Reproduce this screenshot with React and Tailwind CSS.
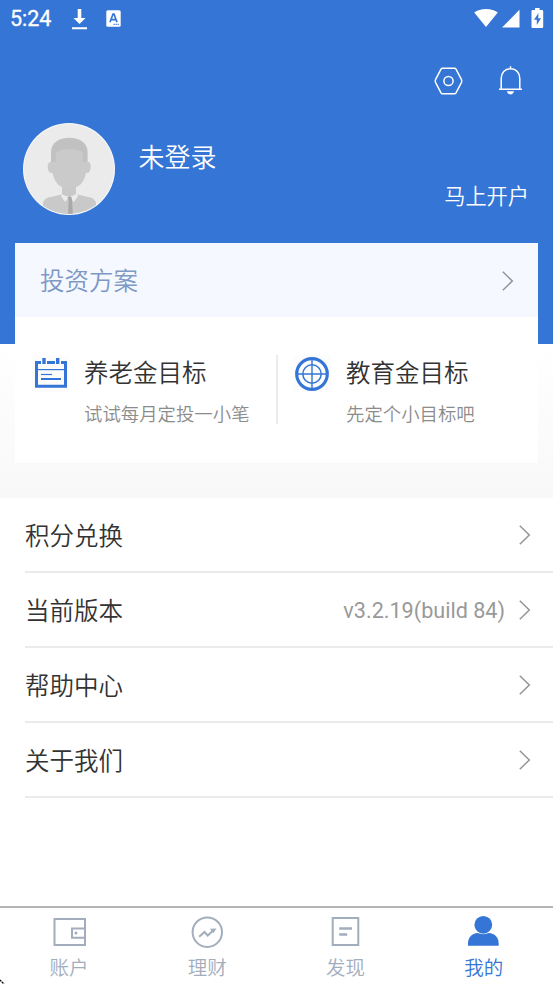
import clsx from 'clsx';

const LINKS = [
  { title: '积分兑换' },
  { title: '当前版本', value: 'v3.2.19(build 84)' },
  { title: '帮助中心' },
  { title: '关于我们' },
];

const Chevron = () => (
  <svg width="12" height="20" viewBox="0 0 12 20" fill="none" stroke="#949494" strokeWidth="1.5" className="shrink-0">
    <path d="M.8 .8 10.300 10 .8 19.200" />
  </svg>
);

const StatusBar = () => (
  <div className="flex h-[38px] items-center pl-[10px] pr-[9px] text-white">
    <span className="w-[61px] text-[21.5px] font-normal leading-none [-webkit-text-stroke:0.3px_white]">5:24</span>
    <svg width="17" height="21" viewBox="0 0 17 21" fill="currentColor">
      <path d="M6.700 0h3.600v9h4.200l-6 6-6-6h4.200zM1 18.200h15v2H1z" />
    </svg>
    <svg width="15" height="17" viewBox="0 0 15 17" className="-mt-0.5 ml-[18px]">
      <rect x=".3" y=".3" width="14.400" height="16.400" rx="1.500" fill="#fff" />
      <path d="M4 12.300 7 4h1l3 8.300M5.200 9.600h4.600" fill="none" stroke="#3575d5" strokeWidth="1.700" />
      <path d="M7.600 14.400h1.200m.8 0h1.200m.8 0h1.200" stroke="#3575d5" strokeWidth="1.200" />
    </svg>
    <div className="-mt-0.5 ml-auto flex items-center">
      <svg width="24" height="20" viewBox="0 0 24 20" fill="currentColor">
        <path d="M.2 4.600C3.200 2.200 7.300.9 12 .9s8.800 1.300 11.800 3.700L12 19z" />
      </svg>
      <svg width="18" height="19" viewBox="0 0 18 19" fill="currentColor" className="ml-1">
        <path d="M0 18.500 17.500.8v17.700z" />
      </svg>
      <svg width="13" height="21" viewBox="0 0 13 21" className="ml-[11px]">
        <path d="M4 0h4.600v2H11a1.200 1.200 0 0 1 1.200 1.200v15.600A1.200 1.200 0 0 1 11 20H1.700a1.200 1.200 0 0 1-1.200-1.200V3.200A1.200 1.200 0 0 1 1.700 2H4z" fill="#fff" />
        <path d="M7.500 5 3 11.800h2.800V17L10 10.200H7.200z" fill="#3575d5" />
      </svg>
    </div>
  </div>
);

const Avatar = () => (
  <svg width="92" height="92" viewBox="0 0 92 92" className="shrink-0">
    <defs>
      <clipPath id="avatar">
        <circle cx="46" cy="46" r="45" />
      </clipPath>
    </defs>
    <circle cx="46" cy="46" r="46" fill="#fafafa" />
    <g clipPath="url(#avatar)">
      <path d="M0 0h92v92H0z" fill="#ebebeb" />
      <path d="M20 92V80c1-4 4-5.500 8-6l12-3h13l12 3c4 .5 7 2 8 6v12z" fill="#c9c9c9" />
      <path d="m40 69-2 4 4 6 4-5 5 5 4-6-2-4z" fill="#ebebeb" />
      <path d="M39 58h14v13c-4 3-10 3-14 0z" fill="#c9c9c9" />
      <path d="m44.500 74 2-.7 2 .7.500 3 1 15h-5l.7-15z" fill="#a9a9a9" />
      <path d="M28 40V29c0-9 8-14.200 18.300-14.200S64.600 20 64.600 29v11z" fill="#c1c1c1" />
      <path d="M28.500 39h4.300v-9.500c3-2.500 8-3.500 13.500-3.500s10.500 1 13.500 3.500V39h4.500c3 0 3.700 2 3.400 5.500-.3 3.500-1.700 6-4.700 5.500-1 5-3 9-6 12-2.500 2-6 2.800-10.700 2.800S38 64 35.500 62c-3-3-5-7-6-12-3 .5-4.400-2-4.700-5.500-.3-3.500.7-5.500 3.700-5.500z" fill="#cacaca" />
    </g>
  </svg>
);

const CalendarIcon = () => (
  <svg width="32" height="31" viewBox="0 0 32 31" fill="none" stroke="#3575d5">
    <path d="M6 4.500H1.500v23.700h29V4.500H26M12 4.500h8" strokeWidth="3" />
    <path d="M9 0v6M22.700 0v6" strokeWidth="3.400" />
    <path d="M2 11.600h28" strokeWidth="1.200" />
    <path d="M6 16.500h11" strokeWidth="1.200" />
    <path d="M6 21h20" strokeWidth="2" />
  </svg>
);

const TargetIcon = () => (
  <svg width="34" height="34" viewBox="0 0 34 34" fill="none" stroke="#3575d5" className="mr-px">
    <circle cx="17" cy="17" r="15.300" strokeWidth="3.200" />
    <circle cx="17" cy="17" r="9.200" strokeWidth="1.500" />
    <path d="M17 2v30M2 17h30" strokeWidth="1.400" />
  </svg>
);

const Goal = ({ icon, title, hint }) => (
  <div className="flex">
    <div className="mr-[15px] flex h-[37px] w-[37px] shrink-0 items-center justify-center bg-[#fcfcfc]">{icon}</div>
    <div className="whitespace-nowrap">
      <div className="mt-px text-[24.5px] leading-9 text-[#333]">{title}</div>
      <div className="mt-1.5 text-[18.4px] leading-[34px] text-[#8c8c8c]">{hint}</div>
    </div>
  </div>
);

const TABS = [
  {
    label: '账户',
    icon: (
      <>
        <rect x="2.500" y="4" width="30.500" height="26" strokeWidth="2" />
        <path d="M33 13.500H20v9.200h13" strokeWidth="2" />
        <circle cx="24" cy="18" r="1.500" fill="currentColor" stroke="none" />
      </>
    ),
  },
  {
    label: '理财',
    icon: (
      <>
        <circle cx="17.300" cy="17.200" r="14.700" strokeWidth="2" />
        <path d="m9.200 21.800 5.300-4.800 3.200 3.500 5.500-5" strokeWidth="2" />
        <path d="m20 13.800 6.500-.3-3.200 4.800z" fill="currentColor" stroke="none" />
      </>
    ),
  },
  {
    label: '发现',
    icon: (
      <>
        <rect x="4.700" y="3" width="25.600" height="27" strokeWidth="2" />
        <path d="M11.200 13.500H24M11.200 19.500h8" strokeWidth="2.400" />
      </>
    ),
  },
  {
    label: '我的',
    active: true,
    icon: (
      <g fill="currentColor" stroke="none">
        <circle cx="17.300" cy="9.800" r="8.900" />
        <path d="M2 30.800v-2.200c0-6.300 4.300-10.300 9.600-10.600 3.500 1.500 7.900 1.500 11.400 0 5.300.3 9.700 4.300 9.700 10.600v2.200z" />
      </g>
    ),
  },
];

export default function App() {
  return (
    <div className="relative flex h-[984px] w-[553px] flex-col overflow-hidden bg-white font-['Roboto','Noto_Sans_CJK_SC',sans-serif] font-[350]">
      <header className="h-[344px] shrink-0 bg-[#3575d5] text-white">
        <StatusBar />
        <div className="mt-[27px] flex h-[30px] items-center justify-end gap-[35px] pr-[30px]">
          <svg width="29" height="28" viewBox="0 0 29 28" fill="none" stroke="currentColor" strokeWidth="1.500" className="mt-px">
            <path d="M8.500 1.200h12q1 0 1.500.9l5.500 10.600q.6 1.300 0 2.600L22 25.900q-.5.900-1.500.9h-12q-1 0-1.500-.9L1.500 15.300q-.6-1.300 0-2.600L7 2.100q.5-.9 1.500-.9z" />
            <circle cx="14.500" cy="14" r="4.600" />
          </svg>
          <svg width="25" height="29" viewBox="0 0 25 29" fill="none" stroke="currentColor" strokeWidth="1.500">
            <path d="M1 23.300h23M3.200 23V12.500c0-5.800 3.700-9.700 9.300-9.700s9.300 3.900 9.300 9.700V23M12.500 3V.3" />
            <path d="M9 25.200h7c-.4 2-1.700 3.200-3.500 3.200s-3.100-1.200-3.500-3.200z" fill="currentColor" stroke="none" />
          </svg>
        </div>
        <div className="mt-7 flex h-[92px] pl-[23px] pr-6">
          <Avatar />
          <div className="ml-[23.5px] mt-4 text-[26px] leading-[38px]">未登录</div>
          <div className="ml-auto self-end text-[21.2px] leading-9">马上开户</div>
        </div>
      </header>

      <div className="h-[154px] shrink-0 bg-linear-to-b from-white to-[#f8f8f8] px-[15px]">
        <section className="relative -top-[101px] h-[220px] bg-white">
          <div className="flex h-[74px] items-center justify-between bg-[#f5f8ff] pl-[25px] pr-6 pt-0.5">
            <span className="pt-[3px] text-[24.5px] text-[#7d99c4]">投资方案</span>
            <Chevron />
          </div>
          <div className="flex pl-[17px] pt-[38px]">
            <div className="h-[69px] w-[246px] border-r-2 border-[#ececec]">
              <Goal icon={<CalendarIcon />} title="养老金目标" hint="试试每月定投一小笔" />
            </div>
            <div className="pl-4">
              <Goal icon={<TargetIcon />} title="教育金目标" hint="先定个小目标吧" />
            </div>
          </div>
        </section>
      </div>

      <main className="flex-1 pl-[25px]">
        {LINKS.map((item) => (
          <div key={item.title} className="flex h-[75px] items-center border-b-2 border-[#ebebeb] pr-[22px]">
            <span className="pt-1.5 text-[24.5px] text-[#333]">{item.title}</span>
            <span className="ml-auto mr-[14px] pt-[3px] text-[21.6px] font-normal text-[#999]">{item.value}</span>
            <Chevron />
          </div>
        ))}
      </main>

      <nav className="grid h-[78px] shrink-0 grid-cols-4 border-t-2 border-[#b5b5b5] pt-[7px]">
        {TABS.map(({ label, icon, active }) => (
          <div key={label} className={clsx('flex flex-col items-center', active ? 'text-[#3575d5]' : 'text-[#a2adbd]')}>
            <svg width="35" height="33" viewBox="0 0 35 33" fill="none" stroke="currentColor">
              {icon}
            </svg>
            <span className="mt-[7px] text-[19.5px] leading-7">{label}</span>
          </div>
        ))}
      </nav>

      {/* corner tick in the bottom left */}
      <svg width="5" height="5" viewBox="0 0 5 5" className="absolute bottom-0 left-0">
        <path d="M0 1 4 5" stroke="#000" strokeWidth="1.300" strokeDasharray="2 .6" />
      </svg>
    </div>
  );
}
